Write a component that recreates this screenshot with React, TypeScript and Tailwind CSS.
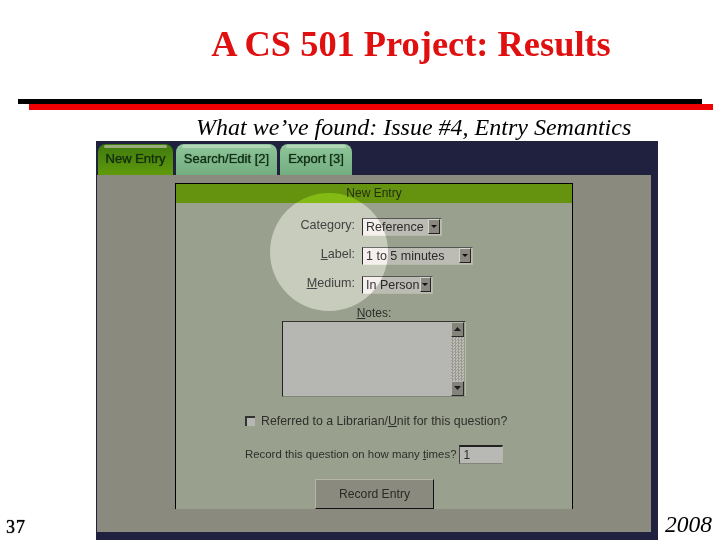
const ScrollArrow = ({ up }: { up?: boolean }) => (
  <div className="w-[13px] h-[15px] bg-[#85847a] border-t border-l border-t-[#b8b8ae] border-l-[#b8b8ae] border-r border-b border-r-[#2a2a2a] border-b-[#2a2a2a] flex items-center justify-center shrink-0">
    <svg width="7" height="4" viewBox="0 0 7 4" className={up ? "rotate-180" : ""}>
      <path d="M0 0h7L3.5 4z" fill="#1c1c1c" />
    </svg>
  </div>
);

const Select = ({ label, width }: { label: string; width: string }) => (
  <div className={`${width} h-[18px] flex items-center justify-between bg-[#bcbcb4] border-l border-t border-l-[#222] border-t-[#555] border-r border-b border-r-[#b4b8a8] border-b-[#b4b8a8] pr-[1px]`}>
    <span className="pl-[3px] text-[12.5px] leading-none text-[#2a2a2a] whitespace-nowrap">{label}</span>
    <div className="w-[12px] h-[15px] bg-[#8b897f] border-t border-l border-t-[#d6d6cc] border-l-[#d6d6cc] border-r border-b border-r-[#222] border-b-[#222] flex items-center justify-center">
      <svg width="6" height="3" viewBox="0 0 6 3">
        <path d="M0 0h6L3 3z" fill="#111" />
      </svg>
    </div>
  </div>
);

const FormRow = ({ children, select }: { children: React.ReactNode; select: React.ReactNode }) => (
  <div className="flex items-center gap-[7px]">
    <div className="w-[179px] pb-[3px] text-right text-[12.6px] leading-none text-[#333]">{children}</div>
    {select}
  </div>
);

const Tab = ({ label, width, active }: { label: string; width: string; active?: boolean }) => (
  <div
    className={`${width} h-[31px] rounded-t-[8px] flex flex-col items-center text-[13px] leading-[15px] whitespace-nowrap ${
      active
        ? "bg-gradient-to-b from-[#3f7a0e] to-[#5f9a0c] text-[#14300a] [text-shadow:0_0_1px_#14300a]"
        : "bg-gradient-to-b from-[#8fc69a] to-[#72ad80] text-[#123014] [text-shadow:0_0_1px_#123014]"
    }`}
  >
    <div className={`w-[calc(100%-12px)] h-[3px] mt-[1px] mb-[3px] rounded-full ${active ? "bg-[#9aad7c]" : "bg-[#b4d6b8]"}`} />
    {label}
  </div>
);

export default function App() {
  return (
    <div className="w-[720px] h-[540px] overflow-hidden bg-white flex flex-col font-['Liberation_Serif',serif] text-black">
      <h1 className="h-[99px] pt-[24px] pl-[102px] text-center text-[36.4px] leading-[40px] font-bold text-[#e01010] whitespace-nowrap">
        A CS 501 Project: Results
      </h1>

      <div className="pl-[18px]">
        <div className="w-[684px] h-[5px] bg-black" />
        <div className="w-[684px] h-[6px] ml-[11px] bg-[#f00000]" />
      </div>

      <p className="h-[31px] pt-[3px] pl-[196px] text-[24px] leading-[28px] italic whitespace-nowrap">
        What we’ve found: Issue #4, Entry Semantics
      </p>

      <div className="flex h-[399px]">
        <div className="w-[96px] flex items-end pb-[4px] pl-[6px]">
          <span className="text-[18px] leading-[18px] tracking-[1px] [text-shadow:0_0_1px_#000]">37</span>
        </div>

        {/* screenshot */}
        <div className="w-[562px] h-full bg-[#20203f] flex flex-col pl-[1px] pr-[7px] pb-[8px] font-['Liberation_Sans',sans-serif] relative">
          <div className="h-[34px] flex items-end gap-[3px] pl-[1px]">
            <Tab label="New Entry" width="w-[75px]" active />
            <Tab label="Search/Edit [2]" width="w-[101px]" />
            <Tab label="Export [3]" width="w-[72px]" />
          </div>

          <div className="flex-1 bg-[#8b8a7e] pt-[8px] pl-[78px]">
            <div className="w-[398px] h-[326px] border-t border-x border-black bg-[#9aa08e] flex flex-col">
              <div className="h-[19px] bg-[#65920f] flex items-center justify-center text-[12px] text-[#24300c]">
                New Entry
              </div>

              <div className="flex flex-col gap-[11px] pt-[15px]">
                <FormRow select={<Select label="Reference" width="w-[80px]" />}>Category:</FormRow>
                <FormRow select={<Select label="1 to 5 minutes" width="w-[111px]" />}>
                  <span className="underline">L</span>abel:
                </FormRow>
                <FormRow select={<Select label="In Person" width="w-[71px]" />}>
                  <span className="underline">M</span>edium:
                </FormRow>
              </div>

              <div className="pt-[12px] text-center text-[12px] leading-[14px] text-[#2e2e2a]">
                <span className="underline">N</span>otes:
              </div>

              <div className="ml-[106px] mt-[1px] w-[184px] h-[76px] flex bg-[#b6b6b2] border-t border-l border-t-[#333] border-l-[#222] border-r border-b border-r-[#b4b8a8] border-b-[#80867a]">
                <div className="flex-1" />
                <div className="w-[14px] flex flex-col justify-between bg-[repeating-conic-gradient(#9a9a92_0_25%,#c0c0b8_0_50%)] bg-[length:3px_3px]">
                  <ScrollArrow up />
                  <ScrollArrow />
                </div>
              </div>

              <div className="ml-[69px] mt-[18px] flex items-center gap-[6px] text-[12.35px] leading-none text-[#2e2e2a] whitespace-nowrap">
                <div className="w-[10px] h-[10px] bg-[#b6b6b2] border-t-2 border-l-2 border-t-[#333] border-l-[#333]" />
                <span>
                  Referred to a Librarian/<span className="underline">U</span>nit for this question?
                </span>
              </div>

              <div className="ml-[69px] mt-[18px] flex items-center gap-[3px] text-[11.4px] leading-none text-[#2e2e2a] whitespace-nowrap">
                <span>
                  Record this question on how many <span className="underline">t</span>imes?
                </span>
                <div className="w-[44px] h-[19px] bg-[#b8b8b4] border-t-2 border-l border-t-[#222] border-l-[#444] border-r border-b border-r-[#b4b8a8] border-b-[#80867a] pl-[3px] flex items-center text-[12px]">
                  1
                </div>
              </div>

              <div className="ml-[139px] mt-[15px] w-[119px] h-[30px] bg-[#8b8a7e] border-t border-l border-t-[#b4b4a8] border-l-[#b4b4a8] border-r border-b border-r-[#111] border-b-[#111] flex items-center justify-center text-[12.2px] text-[#2a2a26]">
                Record Entry
              </div>
            </div>
          </div>

          {/* focus highlight: dodge keeps the text under it dark */}
          <div className="absolute left-[174px] top-[52px] w-[118px] h-[118px] rounded-full bg-[#3b373e] mix-blend-color-dodge" />
        </div>

        <div className="flex-1 flex items-end pb-[3px] pl-[7px]">
          <span className="text-[23.5px] leading-[26px] italic">2008</span>
        </div>
      </div>
    </div>
  );
}
